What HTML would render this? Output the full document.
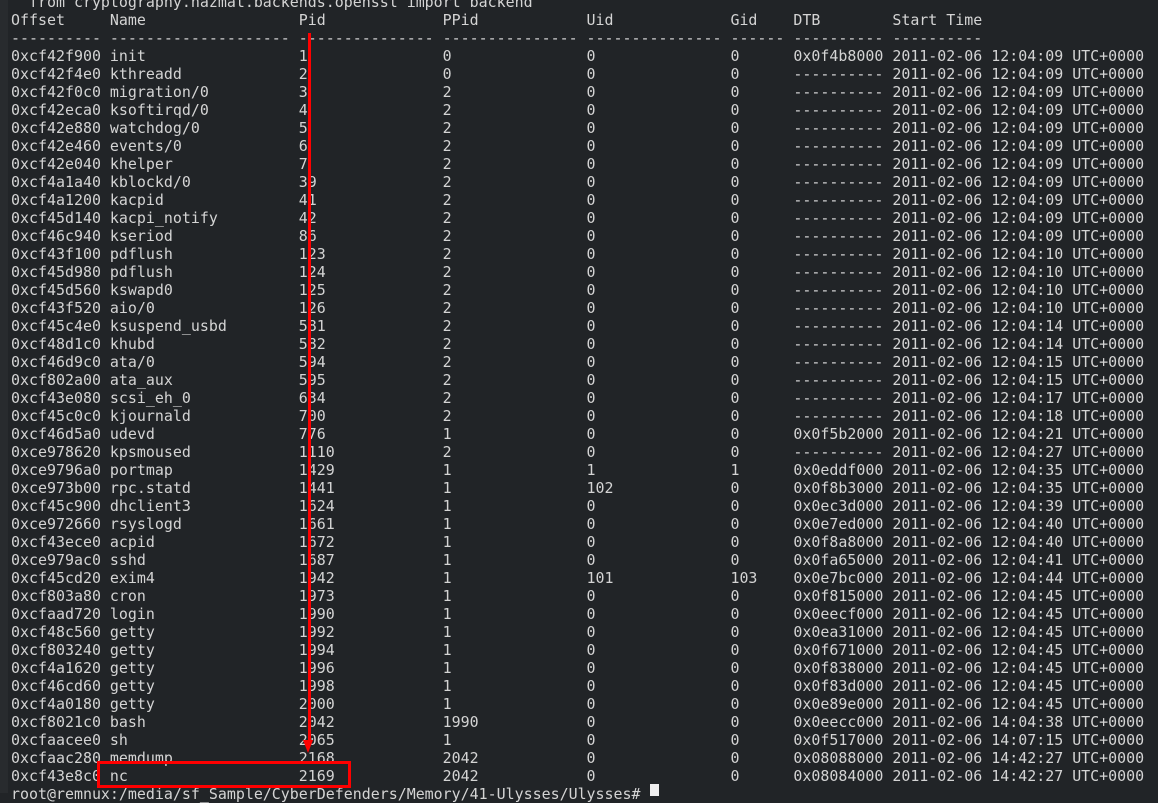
<html><head><style>
body{margin:0;width:1158px;height:793px;overflow:hidden;background:#212427;position:relative}
.strip{position:absolute;left:0;top:0;width:8px;height:793px;background:#282b2e}
pre{position:absolute;left:11px;top:-7px;margin:0;font-family:"DejaVu Sans Mono","Liberation Mono",monospace;font-size:14.95px;line-height:18px;color:#d4d4d4}
.line{position:absolute;left:308px;top:33px;width:3px;height:710px;background:#f00}
.arr{position:absolute;left:303px;top:740px;width:0;height:0;border-left:5px solid transparent;border-right:5px solid transparent;border-top:13px solid #f00}
.box{position:absolute;left:97px;top:761px;width:248px;height:21px;border:3px solid #f00}
.cur{position:absolute;left:650px;top:784px;width:9px;height:12px;background:#eee}
</style></head><body><div class="strip"></div>
<pre>  from cryptography.hazmat.backends.openssl import backend
Offset     Name                 Pid             PPid            Uid             Gid    DTB        Start Time
---------- -------------------- --------------- --------------- --------------- ------ ---------- ----------
0xcf42f900 init                 1               0               0               0      0x0f4b8000 2011-02-06 12:04:09 UTC+0000
0xcf42f4e0 kthreadd             2               0               0               0      ---------- 2011-02-06 12:04:09 UTC+0000
0xcf42f0c0 migration/0          3               2               0               0      ---------- 2011-02-06 12:04:09 UTC+0000
0xcf42eca0 ksoftirqd/0          4               2               0               0      ---------- 2011-02-06 12:04:09 UTC+0000
0xcf42e880 watchdog/0           5               2               0               0      ---------- 2011-02-06 12:04:09 UTC+0000
0xcf42e460 events/0             6               2               0               0      ---------- 2011-02-06 12:04:09 UTC+0000
0xcf42e040 khelper              7               2               0               0      ---------- 2011-02-06 12:04:09 UTC+0000
0xcf4a1a40 kblockd/0            39              2               0               0      ---------- 2011-02-06 12:04:09 UTC+0000
0xcf4a1200 kacpid               41              2               0               0      ---------- 2011-02-06 12:04:09 UTC+0000
0xcf45d140 kacpi_notify         42              2               0               0      ---------- 2011-02-06 12:04:09 UTC+0000
0xcf46c940 kseriod              86              2               0               0      ---------- 2011-02-06 12:04:09 UTC+0000
0xcf43f100 pdflush              123             2               0               0      ---------- 2011-02-06 12:04:10 UTC+0000
0xcf45d980 pdflush              124             2               0               0      ---------- 2011-02-06 12:04:10 UTC+0000
0xcf45d560 kswapd0              125             2               0               0      ---------- 2011-02-06 12:04:10 UTC+0000
0xcf43f520 aio/0                126             2               0               0      ---------- 2011-02-06 12:04:10 UTC+0000
0xcf45c4e0 ksuspend_usbd        581             2               0               0      ---------- 2011-02-06 12:04:14 UTC+0000
0xcf48d1c0 khubd                582             2               0               0      ---------- 2011-02-06 12:04:14 UTC+0000
0xcf46d9c0 ata/0                594             2               0               0      ---------- 2011-02-06 12:04:15 UTC+0000
0xcf802a00 ata_aux              595             2               0               0      ---------- 2011-02-06 12:04:15 UTC+0000
0xcf43e080 scsi_eh_0            634             2               0               0      ---------- 2011-02-06 12:04:17 UTC+0000
0xcf45c0c0 kjournald            700             2               0               0      ---------- 2011-02-06 12:04:18 UTC+0000
0xcf46d5a0 udevd                776             1               0               0      0x0f5b2000 2011-02-06 12:04:21 UTC+0000
0xce978620 kpsmoused            1110            2               0               0      ---------- 2011-02-06 12:04:27 UTC+0000
0xce9796a0 portmap              1429            1               1               1      0x0eddf000 2011-02-06 12:04:35 UTC+0000
0xce973b00 rpc.statd            1441            1               102             0      0x0f8b3000 2011-02-06 12:04:35 UTC+0000
0xcf45c900 dhclient3            1624            1               0               0      0x0ec3d000 2011-02-06 12:04:39 UTC+0000
0xce972660 rsyslogd             1661            1               0               0      0x0e7ed000 2011-02-06 12:04:40 UTC+0000
0xcf43ece0 acpid                1672            1               0               0      0x0f8a8000 2011-02-06 12:04:40 UTC+0000
0xce979ac0 sshd                 1687            1               0               0      0x0fa65000 2011-02-06 12:04:41 UTC+0000
0xcf45cd20 exim4                1942            1               101             103    0x0e7bc000 2011-02-06 12:04:44 UTC+0000
0xcf803a80 cron                 1973            1               0               0      0x0f815000 2011-02-06 12:04:45 UTC+0000
0xcfaad720 login                1990            1               0               0      0x0eecf000 2011-02-06 12:04:45 UTC+0000
0xcf48c560 getty                1992            1               0               0      0x0ea31000 2011-02-06 12:04:45 UTC+0000
0xcf803240 getty                1994            1               0               0      0x0f671000 2011-02-06 12:04:45 UTC+0000
0xcf4a1620 getty                1996            1               0               0      0x0f838000 2011-02-06 12:04:45 UTC+0000
0xcf46cd60 getty                1998            1               0               0      0x0f83d000 2011-02-06 12:04:45 UTC+0000
0xcf4a0180 getty                2000            1               0               0      0x0e89e000 2011-02-06 12:04:45 UTC+0000
0xcf8021c0 bash                 2042            1990            0               0      0x0eecc000 2011-02-06 14:04:38 UTC+0000
0xcfaacee0 sh                   2065            1               0               0      0x0f517000 2011-02-06 14:07:15 UTC+0000
0xcfaac280 memdump              2168            2042            0               0      0x08088000 2011-02-06 14:42:27 UTC+0000
0xcf43e8c0 nc                   2169            2042            0               0      0x08084000 2011-02-06 14:42:27 UTC+0000
root@remnux:/media/sf_Sample/CyberDefenders/Memory/41-Ulysses/Ulysses# </pre>
<div class="line"></div><div class="arr"></div><div class="box"></div><div class="cur"></div>
</body></html>
